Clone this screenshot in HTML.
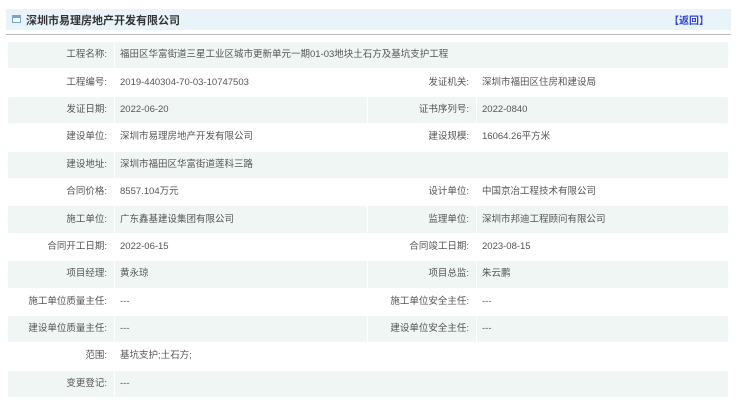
<!DOCTYPE html>
<html><head><meta charset="utf-8"><style>
body{margin:0;width:740px;height:417px;background:#fff;font-family:"Liberation Sans","Noto Sans CJK SC",sans-serif;overflow:hidden;position:relative}
.hd{position:absolute;left:6px;top:9px;width:725px;height:21px;background:#e9f3fa}
.ic{position:absolute;left:6px;top:6px;width:9px;height:8px;border:1px solid #7aa3d0;background:#fff;box-sizing:border-box;border-top:3px solid #7aa3d0}
.tt{position:absolute;left:20px;top:3px;font-size:11px;font-weight:bold;color:#333}
.bk{position:absolute;left:663px;top:3px;font-size:10px;color:#3344cc;font-weight:bold}
.ln{position:absolute;left:6px;top:34px;width:725px;height:1px;background:#bbb}
table{position:absolute;left:7px;top:41px;width:722px;border-spacing:1.5px;font-size:9.5px;color:#555}
td{height:26.4px;padding:0;white-space:nowrap;line-height:12px}
.l{text-align:right;padding-right:7px}
.l2{text-align:right;padding-right:7px}
.v{padding-left:5px}
tr.g td{background:#f0f6f4}
</style></head><body>
<div class="hd"><div class="ic"></div><div class="tt">深圳市易理房地产开发有限公司</div><div class="bk">【返回】</div></div>
<div class="ln"></div>
<table>
<colgroup><col style="width:106px"><col style="width:252px"><col style="width:108px"><col></colgroup>
<tr class="g"><td class="l">工程名称:</td><td class="v" colspan="3">福田区华富街道三星工业区城市更新单元一期01-03地块土石方及基坑支护工程</td></tr>
<tr><td class="l">工程编号:</td><td class="v">2019-440304-70-03-10747503</td><td class="l2">发证机关:</td><td class="v">深圳市福田区住房和建设局</td></tr>
<tr class="g"><td class="l">发证日期:</td><td class="v">2022-06-20</td><td class="l2">证书序列号:</td><td class="v">2022-0840</td></tr>
<tr><td class="l">建设单位:</td><td class="v">深圳市易理房地产开发有限公司</td><td class="l2">建设规模:</td><td class="v">16064.26平方米</td></tr>
<tr class="g"><td class="l">建设地址:</td><td class="v" colspan="3">深圳市福田区华富街道莲科三路</td></tr>
<tr><td class="l">合同价格:</td><td class="v">8557.104万元</td><td class="l2">设计单位:</td><td class="v">中国京冶工程技术有限公司</td></tr>
<tr class="g"><td class="l">施工单位:</td><td class="v">广东鑫基建设集团有限公司</td><td class="l2">监理单位:</td><td class="v">深圳市邦迪工程顾问有限公司</td></tr>
<tr><td class="l">合同开工日期:</td><td class="v">2022-06-15</td><td class="l2">合同竣工日期:</td><td class="v">2023-08-15</td></tr>
<tr class="g"><td class="l">项目经理:</td><td class="v">黄永琼</td><td class="l2">项目总监:</td><td class="v">朱云鹏</td></tr>
<tr><td class="l">施工单位质量主任:</td><td class="v">---</td><td class="l2">施工单位安全主任:</td><td class="v">---</td></tr>
<tr class="g"><td class="l">建设单位质量主任:</td><td class="v">---</td><td class="l2">建设单位安全主任:</td><td class="v">---</td></tr>
<tr><td class="l">范围:</td><td class="v" colspan="3">基坑支护;土石方;</td></tr>
<tr class="g"><td class="l">变更登记:</td><td class="v" colspan="3">---</td></tr>
</table>
</body></html>
